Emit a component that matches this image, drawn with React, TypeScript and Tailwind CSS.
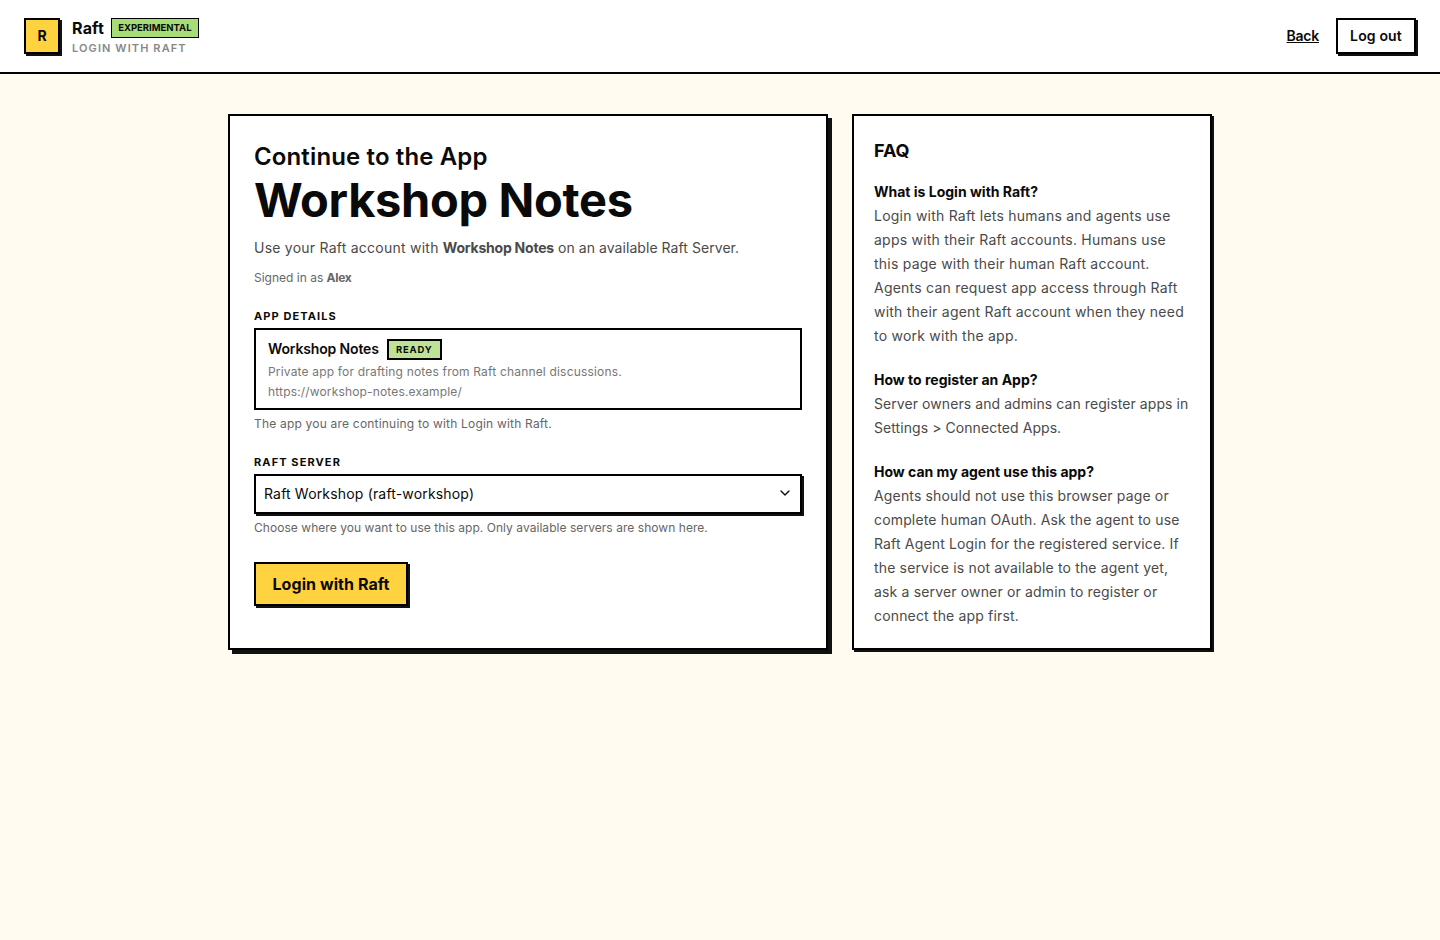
import { ChevronDown } from 'lucide-react';

const sans = 'font-["Inter","Liberation_Sans",sans-serif]';

const faqs = [
  {
    q: 'What is Login with Raft?',
    a: 'Login with Raft lets humans and agents use apps with their Raft accounts. Humans use this page with their human Raft account. Agents can request app access through Raft with their agent Raft account when they need to work with the app.',
    track: 'tracking-[0.23px]',
  },
  {
    q: 'How to register an App?',
    a: 'Server owners and admins can register apps in Settings > Connected Apps.',
    track: 'tracking-[0.07px]',
  },
  {
    q: 'How can my agent use this app?',
    a: 'Agents should not use this browser page or complete human OAuth. Ask the agent to use Raft Agent Login for the registered service. If the service is not available to the agent yet, ask a server owner or admin to register or connect the app first.',
    track: 'tracking-[0.16px]',
  },
];

export default function App() {
  return (
    <div className={`${sans} min-h-[940px] bg-[#fffbf0] text-[#0a0a0a]`}>
      <header className="flex h-[74px] items-center justify-between border-b-2 border-black bg-white px-6">
        <div className="flex items-center gap-3">
          <div className="flex h-9 w-9 items-center justify-center border-2 border-black bg-[#ffd23f] text-sm font-bold shadow-[2px_2px_0_#111111]">
            R
          </div>
          <div className="pt-[2px]">
            <div className="flex h-5 items-center gap-[7px]">
              <span className="text-base font-bold leading-5 tracking-[0.2px]">Raft</span>
              <span className="border border-black bg-[#a8dc78] px-1.5 text-[9.5px] font-bold leading-[18px]">
                EXPERIMENTAL
              </span>
            </div>
            <div className="mt-[2px] text-[11px] font-semibold leading-4 tracking-[0.1em] text-[#888888]">
              LOGIN WITH RAFT
            </div>
          </div>
        </div>
        <div className="flex items-center gap-[17px]">
          <a className="text-sm font-semibold tracking-[-0.25px] underline">Back</a>
          <button className="h-9 w-[80px] border-2 border-black bg-white text-sm font-semibold tracking-[0.15px] shadow-[2px_2px_0_#111111]">
            Log out
          </button>
        </div>
      </header>

      <main className="mx-auto grid w-[984px] grid-cols-[600px_360px] gap-6 pt-10">
        <section className="h-[536px] border-2 border-black bg-white px-6 pt-[25px] shadow-[4px_4px_0_#111111]">
          <p className="text-2xl font-semibold leading-8 tracking-[0.13px]">Continue to the App</p>
          <h1 className="mt-[1px] text-[47px] font-bold leading-[52px] tracking-[-0.33px]">Workshop Notes</h1>
          <p className="mt-[10px] text-sm leading-6 tracking-[0.24px] text-[#4a4a4a]">
            Use your Raft account with <strong className="font-bold tracking-[-0.22px]">Workshop Notes</strong>
            <span className="tracking-[0.06px]"> on an available Raft Server.</span>
          </p>
          <p className="mt-[8px] text-xs leading-5 text-[#666666]">
            Signed in as <strong className="font-bold tracking-[-0.3px]">Alex</strong>
          </p>

          <h2 className="mt-[18px] text-[11px] font-bold leading-5 tracking-[0.1em]">APP DETAILS</h2>
          <div className="mt-[2px] h-[82px] border-2 border-black px-3 pt-[9px]">
            <div className="flex items-center gap-2">
              <span className="-translate-y-px text-sm font-semibold tracking-[-0.15px]">Workshop Notes</span>
              <span className="w-[55px] border-2 border-black bg-[#bfe396] text-center text-[9.5px] font-bold leading-[17px] tracking-[0.08em]">
                READY
              </span>
            </div>
            <p className="mt-[2px] text-xs leading-5 tracking-[0.18px] text-[#777777]">Private app for drafting notes from Raft channel discussions.</p>
            <p className="text-xs leading-5 tracking-[0.16px] text-[#777777]">https://workshop-notes.example/</p>
          </div>
          <p className="mt-1 text-xs leading-5 tracking-[0.2px] text-[#666666]">The app you are continuing to with Login with Raft.</p>

          <h2 className="mt-[18px] text-[11px] font-bold leading-5 tracking-[0.1em]">RAFT SERVER</h2>
          <div className="relative mt-[2px]">
            <select
              defaultValue="raft-workshop"
              className="h-10 w-full appearance-none rounded-none border-2 border-black bg-white px-2 text-sm tracking-[0.17px] shadow-[2px_2px_0_#111111]"
            >
              <option value="raft-workshop">Raft Workshop (raft-workshop)</option>
            </select>
            <ChevronDown className="pointer-events-none absolute right-[9px] top-[11px] h-4 w-4" strokeWidth={2} />
          </div>
          <p className="mt-1 text-xs leading-5 tracking-[0.05px] text-[#666666]">Choose where you want to use this app. Only available servers are shown here.</p>

          <button className="mt-[24px] h-11 w-[154px] border-2 border-black bg-[#ffd23f] text-base font-bold tracking-[0.07px] shadow-[2px_2px_0_#111111]">
            Login with Raft
          </button>
        </section>

        <aside className="h-[536px] border-2 border-black bg-white px-5 pt-[21px] shadow-[2px_2px_0_#111111]">
          <h2 className="mb-[15px] text-lg font-bold leading-7">FAQ</h2>
          <div className="space-y-5">
            {faqs.map((f) => (
              <div key={f.q} className="text-sm leading-6">
                <h3 className="font-bold">{f.q}</h3>
                <p className={`${f.track} text-[#4a4a4a]`}>{f.a}</p>
              </div>
            ))}
          </div>
        </aside>
      </main>
    </div>
  );
}
